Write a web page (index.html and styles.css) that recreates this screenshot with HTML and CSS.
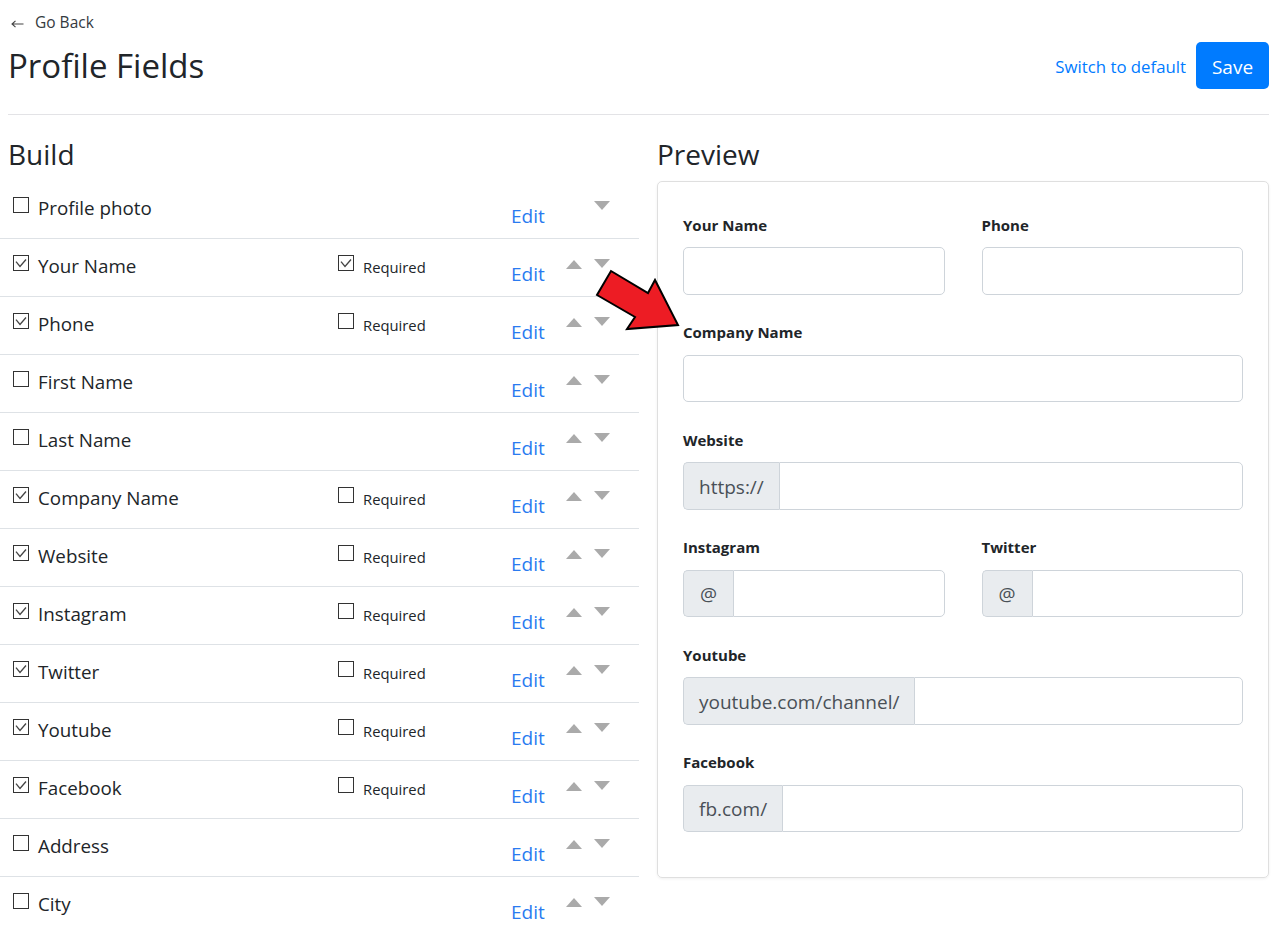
FILE: index.html
```html
<!DOCTYPE html>
<html lang="en">

<head>
  <meta charset="UTF-8" />
  <title>Profile Fields</title>
  <link rel="stylesheet" href="styles.css">
</head>

<body>
  <header class="top">
    <a class="back" href="#"><svg class="back-arrow" width="13" height="8" viewBox="0 0 13 8"><path d="M12.500 4H1M4.500 .8L1 4l3.500 3.200" /></svg>Go Back</a>
    <div class="title-row">
      <h1>Profile Fields</h1>
      <div class="actions">
        <a class="switch" href="#">Switch to default</a>
        <button class="save">Save</button>
      </div>
    </div>
  </header>

  <main class="columns">
    <section class="build">
      <h2 class="build-title">Build</h2>
      <ul class="fields">
        <li class="field">
          <span class="box"></span><span class="name">Profile photo</span>
          <span class="req"></span>
          <a class="edit" href="#">Edit</a>
          <span class="up none"></span><span class="down"></span>
        </li>
        <li class="field">
          <span class="box on"><svg viewBox="0 0 14 14"><path d="M2 5.700l4 4.800 6-7" /></svg></span><span class="name">Your Name</span>
          <span class="req"><span class="box on"><svg viewBox="0 0 14 14"><path d="M2 5.700l4 4.800 6-7" /></svg></span><span class="req-text">Required</span></span>
          <a class="edit" href="#">Edit</a>
          <span class="up"></span><span class="down"></span>
        </li>
        <li class="field">
          <span class="box on"><svg viewBox="0 0 14 14"><path d="M2 5.700l4 4.800 6-7" /></svg></span><span class="name">Phone</span>
          <span class="req"><span class="box"></span><span class="req-text">Required</span></span>
          <a class="edit" href="#">Edit</a>
          <span class="up"></span><span class="down"></span>
        </li>
        <li class="field">
          <span class="box"></span><span class="name">First Name</span>
          <span class="req"></span>
          <a class="edit" href="#">Edit</a>
          <span class="up"></span><span class="down"></span>
        </li>
        <li class="field">
          <span class="box"></span><span class="name">Last Name</span>
          <span class="req"></span>
          <a class="edit" href="#">Edit</a>
          <span class="up"></span><span class="down"></span>
        </li>
        <li class="field">
          <span class="box on"><svg viewBox="0 0 14 14"><path d="M2 5.700l4 4.800 6-7" /></svg></span><span class="name">Company Name</span>
          <span class="req"><span class="box"></span><span class="req-text">Required</span></span>
          <a class="edit" href="#">Edit</a>
          <span class="up"></span><span class="down"></span>
        </li>
        <li class="field">
          <span class="box on"><svg viewBox="0 0 14 14"><path d="M2 5.700l4 4.800 6-7" /></svg></span><span class="name">Website</span>
          <span class="req"><span class="box"></span><span class="req-text">Required</span></span>
          <a class="edit" href="#">Edit</a>
          <span class="up"></span><span class="down"></span>
        </li>
        <li class="field">
          <span class="box on"><svg viewBox="0 0 14 14"><path d="M2 5.700l4 4.800 6-7" /></svg></span><span class="name">Instagram</span>
          <span class="req"><span class="box"></span><span class="req-text">Required</span></span>
          <a class="edit" href="#">Edit</a>
          <span class="up"></span><span class="down"></span>
        </li>
        <li class="field">
          <span class="box on"><svg viewBox="0 0 14 14"><path d="M2 5.700l4 4.800 6-7" /></svg></span><span class="name">Twitter</span>
          <span class="req"><span class="box"></span><span class="req-text">Required</span></span>
          <a class="edit" href="#">Edit</a>
          <span class="up"></span><span class="down"></span>
        </li>
        <li class="field">
          <span class="box on"><svg viewBox="0 0 14 14"><path d="M2 5.700l4 4.800 6-7" /></svg></span><span class="name">Youtube</span>
          <span class="req"><span class="box"></span><span class="req-text">Required</span></span>
          <a class="edit" href="#">Edit</a>
          <span class="up"></span><span class="down"></span>
        </li>
        <li class="field">
          <span class="box on"><svg viewBox="0 0 14 14"><path d="M2 5.700l4 4.800 6-7" /></svg></span><span class="name">Facebook</span>
          <span class="req"><span class="box"></span><span class="req-text">Required</span></span>
          <a class="edit" href="#">Edit</a>
          <span class="up"></span><span class="down"></span>
        </li>
        <li class="field">
          <span class="box"></span><span class="name">Address</span>
          <span class="req"></span>
          <a class="edit" href="#">Edit</a>
          <span class="up"></span><span class="down"></span>
        </li>
        <li class="field">
          <span class="box"></span><span class="name">City</span>
          <span class="req"></span>
          <a class="edit" href="#">Edit</a>
          <span class="up"></span><span class="down"></span>
        </li>
      </ul>
    </section>

    <section class="preview">
      <h2 class="preview-title">Preview</h2>
      <form class="card">
        <div class="form-row">
          <div class="group"><label>Your Name</label><input type="text" /></div>
          <div class="group"><label>Phone</label><input type="text" /></div>
        </div>
        <div class="group"><label>Company Name</label><input type="text" /></div>
        <div class="group">
          <label>Website</label>
          <div class="input-group"><span class="prefix">https://</span><input type="text" /></div>
        </div>
        <div class="form-row">
          <div class="group">
            <label>Instagram</label>
            <div class="input-group"><span class="prefix at">@</span><input type="text" /></div>
          </div>
          <div class="group">
            <label>Twitter</label>
            <div class="input-group"><span class="prefix at">@</span><input type="text" /></div>
          </div>
        </div>
        <div class="group">
          <label>Youtube</label>
          <div class="input-group"><span class="prefix">youtube.com/channel/</span><input type="text" /></div>
        </div>
        <div class="group">
          <label>Facebook</label>
          <div class="input-group"><span class="prefix">fb.com/</span><input type="text" /></div>
        </div>
      </form>
    </section>
  </main>

  <svg class="pointer" width="90" height="66" viewBox="0 0 90 66">
    <polygon points="25,3 62,25 69,12 92,57 41,61 49,49 11,27" transform="translate(-14 -3)" />
  </svg>
</body>

</html>
```

FILE: styles.css
```css
* {
  margin: 0;
  padding: 0;
  box-sizing: border-box;
}

html,
body {
  height: 100vh;
  overflow: hidden;
}

body {
  font-family: 'Open Sans', 'Noto Sans', sans-serif;
  color: #212529;
  background: #fff;
  position: relative;
}

a {
  text-decoration: none;
}

.top {
  margin: 0 8px;
  padding-top: 12px;
  height: 115px;
  border-bottom: 1px solid #e3e3e6;
}

.back {
  display: flex;
  align-items: center;
  font-size: 15.500px;
  line-height: 21px;
  color: #343a40;
}

.back-arrow {
  margin: 3px 11px 0 3px;
}

.back-arrow path {
  fill: none;
  stroke: #444;
  stroke-width: 1.100;
}

.title-row {
  display: flex;
  justify-content: space-between;
  align-items: center;
  margin-top: 9px;
}

h1 {
  font-size: 33px;
  font-weight: 400;
  line-height: 47px;
}

.actions {
  display: flex;
  align-items: center;
  gap: 10px;
}

.switch {
  margin-top: 2px;
  font-size: 16.800px;
  color: #007bff;
}

.save {
  width: 73px;
  height: 47px;
  padding-top: 2px;
  font-family: inherit;
  font-size: 19px;
  color: #fff;
  background: #007bff;
  border: none;
  border-radius: 5px;
}

.columns {
  display: flex;
}

.build {
  width: 639px;
}

.build-title {
  font-size: 28px;
  font-weight: 400;
  line-height: 40px;
  margin: 19px 0 7px 8px;
}

.fields {
  list-style: none;
}

.field {
  display: flex;
  align-items: flex-start;
  height: 58px;
  border-bottom: 1px solid #dee2e6;
  padding: 16px 0 0 13px;
}

.box {
  flex: none;
  width: 16px;
  height: 16px;
  border: 1px solid #333;
  background: #fff;
  display: block;
}

.box svg {
  display: block;
  width: 14px;
  height: 14px;
}

.box path {
  fill: none;
  stroke: #444;
  stroke-width: 1.300;
}

.name {
  width: 309px;
  padding-left: 9px;
  font-size: 18.800px;
  line-height: 22px;
}

.req {
  display: flex;
  width: 173px;
}

.req-text {
  padding-left: 9px;
  padding-top: 1px;
  font-size: 14.800px;
  line-height: 22px;
}

.edit {
  width: 55px;
  margin-top: 7px;
  font-size: 19px;
  line-height: 24px;
  color: #2a7bf0;
}

.up,
.down {
  width: 0;
  height: 0;
  border-left: 8px solid transparent;
  border-right: 8px solid transparent;
}

.up {
  margin-top: 5px;
  border-bottom: 9px solid #aaa;
}

.up.none {
  visibility: hidden;
}

.down {
  margin: 4px 0 0 12px;
  border-top: 9px solid #aaa;
}

.preview {
  width: 612px;
  margin-left: 18px;
}

.preview-title {
  font-size: 28px;
  font-weight: 400;
  line-height: 40px;
  margin: 19px 0 7px;
}

.card {
  height: 697px;
  padding: 31.500px 25px 0;
  border: 1px solid #dfdfdf;
  border-radius: 5px;
  box-shadow: 0 1px 3px rgba(0, 0, 0, 0.06);
}

.form-row {
  display: flex;
  gap: 37px;
}

.form-row .group {
  flex: 1;
}

.group {
  height: 107.500px;
}

label {
  display: block;
  font-size: 15px;
  font-weight: 700;
  line-height: 22px;
  margin-bottom: 11.500px;
  color: #212529;
}

input {
  display: block;
  width: 100%;
  height: 47.500px;
  border: 1px solid #ced4da;
  border-radius: 5px;
  background: #fff;
}

.input-group {
  display: flex;
}

.input-group input {
  flex: 1;
  min-width: 0;
  border-radius: 0 5px 5px 0;
}

.prefix {
  flex: none;
  display: flex;
  align-items: center;
  padding: 2px 15px 0;
  height: 47.500px;
  font-size: 19px;
  color: #495057;
  background: #e9ecef;
  border: 1px solid #ced4da;
  border-right: none;
  border-radius: 5px 0 0 5px;
}

.prefix.at {
  padding: 2px 16px 0;
}

.pointer {
  position: absolute;
  left: 600px;
  top: 271px;
  overflow: visible;
}

.pointer polygon {
  fill: #ed1c24;
  stroke: #000;
  stroke-width: 2;
}
```
